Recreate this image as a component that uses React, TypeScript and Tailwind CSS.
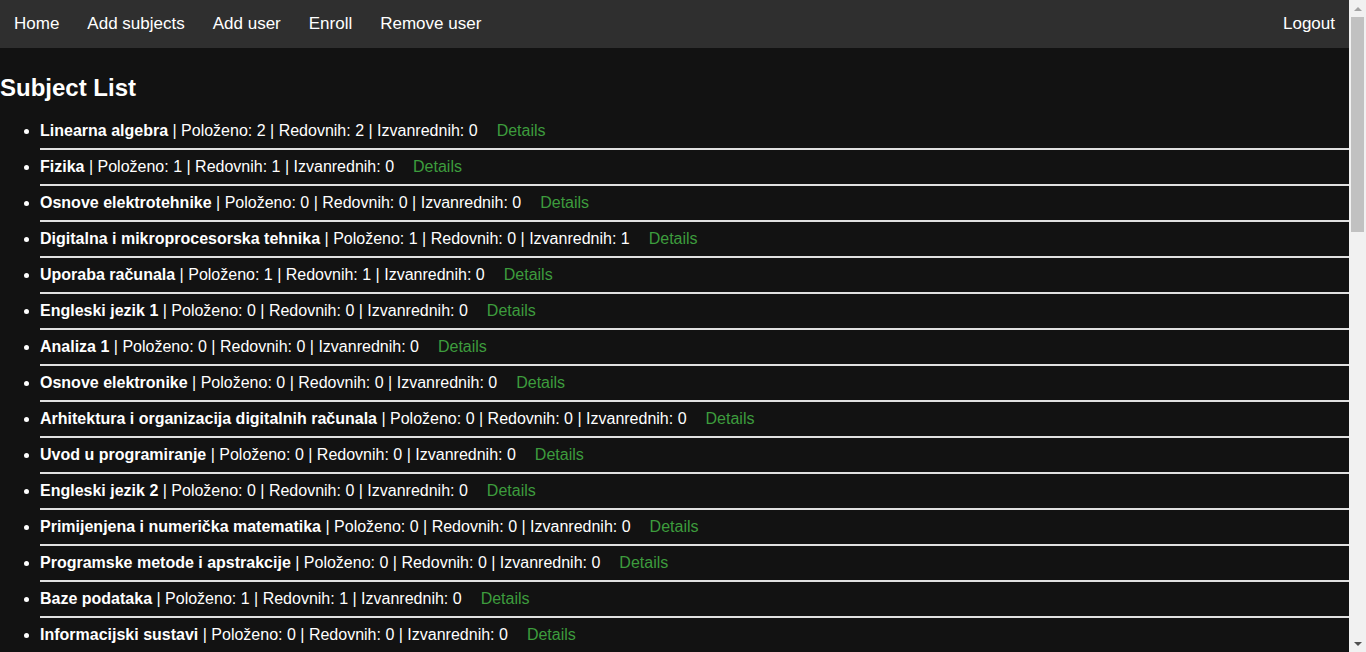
import React from 'react';

interface Subject {
  name: string;
  polozeno: number;
  redovnih: number;
  izvanrednih: number;
}

const subjects: Subject[] = [
  { name: 'Linearna algebra', polozeno: 2, redovnih: 2, izvanrednih: 0 },
  { name: 'Fizika', polozeno: 1, redovnih: 1, izvanrednih: 0 },
  { name: 'Osnove elektrotehnike', polozeno: 0, redovnih: 0, izvanrednih: 0 },
  { name: 'Digitalna i mikroprocesorska tehnika', polozeno: 1, redovnih: 0, izvanrednih: 1 },
  { name: 'Uporaba računala', polozeno: 1, redovnih: 1, izvanrednih: 0 },
  { name: 'Engleski jezik 1', polozeno: 0, redovnih: 0, izvanrednih: 0 },
  { name: 'Analiza 1', polozeno: 0, redovnih: 0, izvanrednih: 0 },
  { name: 'Osnove elektronike', polozeno: 0, redovnih: 0, izvanrednih: 0 },
  { name: 'Arhitektura i organizacija digitalnih računala', polozeno: 0, redovnih: 0, izvanrednih: 0 },
  { name: 'Uvod u programiranje', polozeno: 0, redovnih: 0, izvanrednih: 0 },
  { name: 'Engleski jezik 2', polozeno: 0, redovnih: 0, izvanrednih: 0 },
  { name: 'Primijenjena i numerička matematika', polozeno: 0, redovnih: 0, izvanrednih: 0 },
  { name: 'Programske metode i apstrakcije', polozeno: 0, redovnih: 0, izvanrednih: 0 },
  { name: 'Baze podataka', polozeno: 1, redovnih: 1, izvanrednih: 0 },
  { name: 'Informacijski sustavi', polozeno: 0, redovnih: 0, izvanrednih: 0 },
];

const navLinks = ['Home', 'Add subjects', 'Add user', 'Enroll', 'Remove user'];

function Scrollbar() {
  return (
    <div className="w-[17px] shrink-0 bg-[#f1f1f1] flex flex-col items-center">
      <div className="h-[17px] flex items-center justify-center">
        <div className="w-0 h-0 border-l-[4px] border-r-[4px] border-b-[4px] border-l-transparent border-r-transparent border-b-[#a3a3a3]" />
      </div>
      <div className="w-[13px] h-[215px] bg-[#c1c1c1]" />
      <div className="flex-1" />
      <div className="h-[17px] flex items-center justify-center">
        <div className="w-0 h-0 border-l-[4px] border-r-[4px] border-t-[4px] border-l-transparent border-r-transparent border-t-[#505050]" />
      </div>
    </div>
  );
}

export default function App() {
  return (
    <div
      className="flex h-[652px] overflow-hidden bg-[#121212] text-white"
      style={{ fontFamily: '"Liberation Sans", Arial, sans-serif' }}
    >
      <div className="flex-1 min-w-0">
        {/* Navbar */}
        <nav className="h-12 bg-[#2f2f2f] flex items-center justify-between">
          <div className="flex">
            {navLinks.map((l) => (
              <a key={l} className="px-[14px] text-[17px] text-white">
                {l}
              </a>
            ))}
          </div>
          <a className="px-[14px] text-[17px] text-white">Logout</a>
        </nav>

        <h2 className="mt-[26px] mb-[12px] text-2xl leading-7 font-bold">Subject List</h2>

        <ul className="list-disc pl-10">
          {subjects.map((s) => (
            <li
              key={s.name}
              className="pt-[8px] pb-[8px] text-[16px] leading-[18px] border-b-2 border-[#e0e0e0]"
            >
              <span className="font-bold">{s.name}</span> | Položeno: {s.polozeno} | Redovnih: {s.redovnih} |
              Izvanrednih: {s.izvanrednih}
              <a className="ml-[19px] text-[16px] text-[#3d9c3d]">Details</a>
            </li>
          ))}
        </ul>
      </div>
      <Scrollbar />
    </div>
  );
}
